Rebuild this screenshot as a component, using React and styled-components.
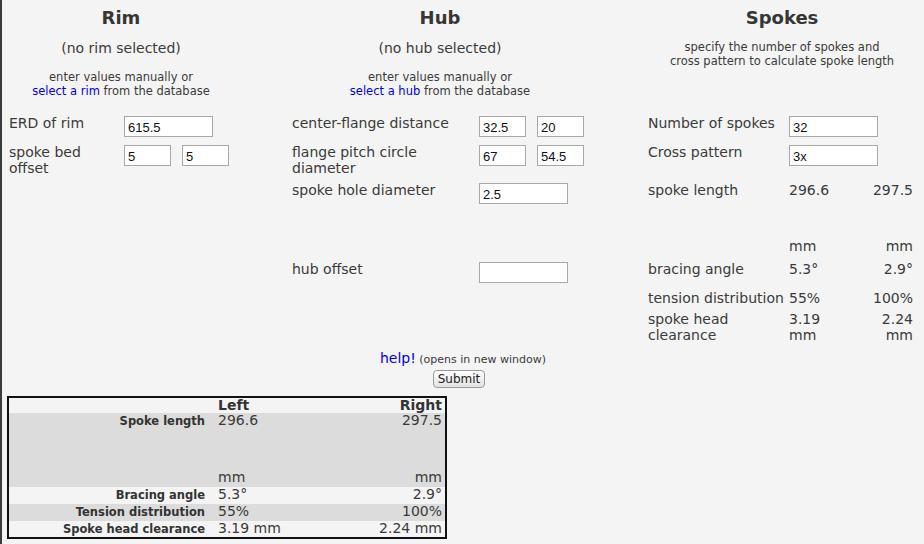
import styled, { createGlobalStyle } from 'styled-components';

const GlobalStyle = createGlobalStyle`
  html, body {
    margin: 0;
    padding: 0;
    background: #f4f4f4;
  }
`;

export default function App() {
  return (
    <Page>
      <GlobalStyle />

      <Heads>
        <Head>
          <Title>Rim</Title>
          <Selected>(no rim selected)</Selected>
          <Note>
            enter values manually or<br />
            <Link>select a rim</Link> from the database
          </Note>
        </Head>
        <Head>
          <Title>Hub</Title>
          <Selected>(no hub selected)</Selected>
          <Note>
            enter values manually or<br />
            <Link>select a hub</Link> from the database
          </Note>
        </Head>
        <Head>
          <Title>Spokes</Title>
          <Note top="11px">
            specify the number of spokes and<br />
            cross pattern to calculate spoke length
          </Note>
        </Head>
      </Heads>

      <Form>
        {/* row 1 */}
        <Label>ERD of rim</Label>
        <Inputs><Field wide defaultValue="615.5" /></Inputs>
        <Label>center-flange distance</Label>
        <Inputs><Field defaultValue="32.5" /><Field defaultValue="20" /></Inputs>
        <Label>Number of spokes</Label>
        <Inputs span><Field wide defaultValue="32" /></Inputs>

        {/* row 2 */}
        <Label>spoke bed<br />offset</Label>
        <Inputs><Field defaultValue="5" /><Field defaultValue="5" /></Inputs>
        <Label>flange pitch circle<br />diameter</Label>
        <Inputs><Field defaultValue="67" /><Field defaultValue="54.5" /></Inputs>
        <Label>Cross pattern</Label>
        <Inputs span><Field wide defaultValue="3x" /></Inputs>

        {/* row 3 */}
        <Empty />
        <Empty />
        <Label>spoke hole diameter</Label>
        <Inputs><Field wide defaultValue="2.5" /></Inputs>
        <Label>spoke length</Label>
        <Result>
          <span>296.6</span>
          <span>mm</span>
        </Result>
        <Result right>
          <span>297.5</span>
          <span>mm</span>
        </Result>

        {/* row 4 */}
        <Empty />
        <Empty />
        <Label>hub offset</Label>
        <Inputs><Field wide defaultValue="" /></Inputs>
        <Label>bracing angle</Label>
        <Value>5.3°</Value>
        <Value right>2.9°</Value>

        {/* row 5 */}
        <Empty />
        <Empty />
        <Empty />
        <Empty />
        <Label>tension distribution</Label>
        <Value>55%</Value>
        <Value right>100%</Value>

        {/* row 6 */}
        <Empty />
        <Empty />
        <Empty />
        <Empty />
        <Label>spoke head<br />clearance</Label>
        <Value>3.19<br />mm</Value>
        <Value right>2.24<br />mm</Value>
      </Form>

      <Actions>
        <Help>
          <HelpLink>help!</HelpLink> (opens in new window)
        </Help>
        <Submit>Submit</Submit>
      </Actions>

      <Summary>
        <tbody>
          <SumRow h="16px">
            <RowHead />
            <ColHead>Left</ColHead>
            <ColHead right>Right</ColHead>
          </SumRow>
          <SumRow shade h="74px">
            <RowHead>Spoke length</RowHead>
            <SumCell>
              <Stack><span>296.6</span><span>mm</span></Stack>
            </SumCell>
            <SumCell right>
              <Stack right><span>297.5</span><span>mm</span></Stack>
            </SumCell>
          </SumRow>
          <SumRow h="17px">
            <RowHead>Bracing angle</RowHead>
            <SumCell>5.3°</SumCell>
            <SumCell right>2.9°</SumCell>
          </SumRow>
          <SumRow shade h="17px">
            <RowHead>Tension distribution</RowHead>
            <SumCell>55%</SumCell>
            <SumCell right>100%</SumCell>
          </SumRow>
          <SumRow h="16px">
            <RowHead>Spoke head clearance</RowHead>
            <SumCell>3.19 mm</SumCell>
            <SumCell right>2.24 mm</SumCell>
          </SumRow>
        </tbody>
      </Summary>
    </Page>
  );
}

const Page = styled.div`
  box-sizing: border-box;
  width: 924px;
  height: 544px;
  overflow: hidden;
  border-left: 2px solid #3c3c3c;
  background: #f4f4f4;
  color: #3a3a3a;
  font-family: 'DejaVu Sans', Verdana, sans-serif;
`;

const Heads = styled.div`
  display: grid;
  grid-template-columns: 238px 400px 284px;
  height: 114px;
`;

const Head = styled.div`
  display: flex;
  flex-direction: column;
  align-items: center;
  text-align: center;
`;

const Title = styled.h2`
  margin: 7px 0 0;
  font-size: 18px;
  line-height: 22px;
  font-weight: bold;
  color: #363636;
`;

const Selected = styled.div`
  margin-top: 11px;
  font-size: 14px;
  line-height: 17px;
`;

const Note = styled.div`
  margin-top: ${props => props.top || '13px'};
  font-size: 11.5px;
  line-height: 14px;
`;

const Link = styled.span`
  color: #0000ee;
`;

const Form = styled.div`
  display: grid;
  grid-template-columns: 115px 168px 187px 169px 141px 62px 62px;
  grid-template-rows: 29px 38px 79px 29px 21px 36px;
  padding-left: 7px;
`;

const Label = styled.div`
  padding-top: 1px;
  font-size: 14px;
  line-height: 16px;
`;

const Empty = styled.div``;

const Inputs = styled.div`
  display: flex;
  gap: 11px;
  align-items: flex-start;
  padding-top: 2px;
  ${props => props.span && 'grid-column: span 2;'}
`;

const Field = styled.input.attrs({ type: 'text' })`
  box-sizing: border-box;
  width: ${props => (props.wide ? '89px' : '47px')};
  height: 21px;
  padding: 2px 3px 0;
  border: 1px solid #a8a8a8;
  background: #fff;
  color: #111;
  font-family: 'Liberation Sans', Arial, sans-serif;
  font-size: 13px;
`;

const Value = styled.div`
  font-size: 14px;
  line-height: 16px;
  padding-top: 1px;
  text-align: ${props => (props.right ? 'right' : 'left')};
`;

const Result = styled(Value)`
  display: flex;
  flex-direction: column;
  justify-content: space-between;
  align-items: ${props => (props.right ? 'flex-end' : 'flex-start')};
  padding-bottom: 6px;
`;

const Actions = styled.div`
  display: flex;
  flex-direction: column;
  align-items: center;
  margin-top: 4px;
`;

const Help = styled.div`
  font-size: 11px;
  line-height: 16px;
`;

const HelpLink = styled.span`
  color: #0000ee;
  font-size: 14px;
`;

const Submit = styled.button`
  margin: 2px 8px 0 0;
  height: 18px;
  padding: 0 4px;
  border: 1px solid #9a9a9a;
  border-radius: 4px;
  background: linear-gradient(#ffffff, #e2e2e2);
  color: #222;
  font-family: 'DejaVu Sans', Verdana, sans-serif;
  font-size: 12px;
  line-height: 15px;
`;

const Summary = styled.table`
  margin: 8px 0 0 5px;
  width: 440px;
  border: 2px solid #111;
  border-collapse: collapse;
  font-size: 14px;
`;

const SumRow = styled.tr`
  height: ${props => props.h};
  background: ${props => (props.shade ? '#dcdcdc' : 'transparent')};
`;

const ColHead = styled.th`
  padding: 0 3px 0 11px;
  font-size: 14px;
  line-height: 15px;
  text-align: ${props => (props.right ? 'right' : 'left')};
  color: #333;
`;

const RowHead = styled.th`
  width: 196px;
  padding: 0 2px 0 0;
  vertical-align: top;
  text-align: right;
  font-size: 11.5px;
  line-height: 16px;
  color: #333;
`;

const SumCell = styled.td`
  padding: 0 3px 0 11px;
  vertical-align: top;
  line-height: 15px;
  text-align: ${props => (props.right ? 'right' : 'left')};
`;

const Stack = styled.div`
  display: flex;
  flex-direction: column;
  justify-content: space-between;
  align-items: ${props => (props.right ? 'flex-end' : 'flex-start')};
  height: 72px;
`;
